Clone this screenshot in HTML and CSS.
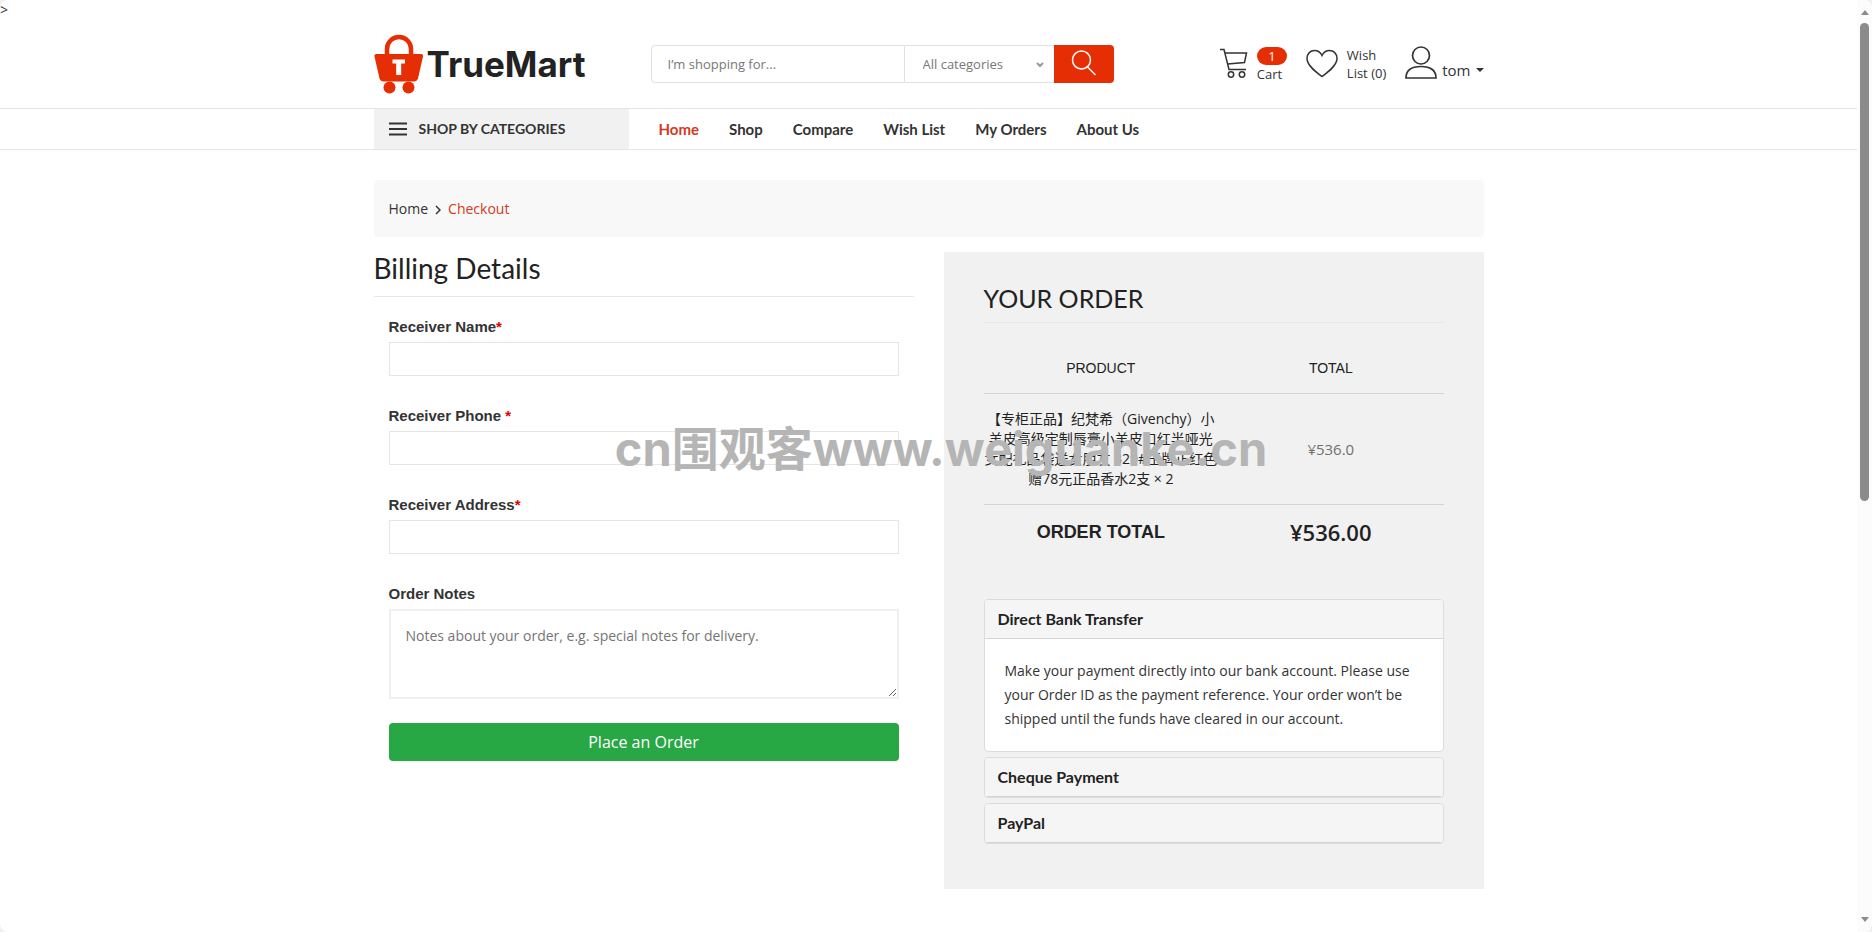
FILE: index.html
```html
<!DOCTYPE html>
<html lang="en">
<head>
    <meta charset="UTF-8">
    <title>Checkout - TrueMart</title>
    <link rel="stylesheet" href="styles.css">
</head>
<body>
<div class="page">
    <div class="stray">&gt;</div>

    <header>
        <div class="container header-top">
            <a class="logo" href="#">
                <svg width="50" height="60" viewBox="0 0 50 60" aria-hidden="true">
                    <path d="M13 22V15a12 12 0 0 1 24 0v7" fill="none" stroke="#e62e04" stroke-width="4.5"/>
                    <path d="M2.500 20h44.500q2.500 0 2 2.500l-5 22q-1 3-4 3h-30.500q-3 0-4-3l-5-22q-.5-2.500 2-2.500z" fill="#e62e04"/>
                    <path d="M18.500 25.500h12.500v4h-3.800v11.500h-5v-11.500h-3.700z" fill="#fff"/>
                    <circle cx="15.500" cy="53.500" r="6" fill="#e62e04"/>
                    <circle cx="34.500" cy="53.500" r="6" fill="#e62e04"/>
                </svg>
                <span>TrueMart</span>
            </a>
            <form class="search">
                <input type="text" aria-label="Search" placeholder="I’m shopping for...">
                <div class="select-wrap">
                    <select aria-label="Category">
                        <option>All categories</option>
                    </select>
                    <svg width="8" height="6" viewBox="0 0 8 6" aria-hidden="true"><path d="M1 1l3 3 3-3" fill="none" stroke="#999" stroke-width="2"/></svg>
                </div>
                <button type="button" aria-label="Search">
                    <svg width="26" height="28" viewBox="0 0 26 28" aria-hidden="true" fill="none" stroke="#fff" stroke-width="1.500">
                        <circle cx="10.500" cy="10" r="9"/>
                        <path d="M16.500 17l8 8"/>
                    </svg>
                </button>
            </form>
            <div class="actions">
                <a class="action" href="#">
                    <svg width="28" height="32" viewBox="0 0 28 32" aria-hidden="true" fill="none" stroke="#333" stroke-width="1.500">
                        <path d="M0 1.500h4l5 20h17"/>
                        <path d="M5 5h21.500l-2 9.500-17 1.500"/>
                        <circle cx="11" cy="26.500" r="2.700"/>
                        <circle cx="22" cy="26.500" r="2.700"/>
                    </svg>
                    <span class="action-text"><b class="badge">1</b>Cart</span>
                </a>
                <a class="action" href="#">
                    <svg width="32" height="30" viewBox="0 0 32 30" aria-hidden="true" fill="none" stroke="#333" stroke-width="1.500">
                        <path d="M16 27.500C10 23 1 16.500 1 9.500 1 4.500 4.500 1.500 8.500 1.500c3.500 0 6 2 7.500 5 1.500-3 4-5 7.500-5 4 0 7.500 3 7.500 8 0 7-9 13.500-15 18z"/>
                    </svg>
                    <span class="action-text">Wish<br>List (0)</span>
                </a>
                <a class="action user" href="#">
                    <svg width="32" height="34" viewBox="0 0 32 34" aria-hidden="true" fill="none" stroke="#333" stroke-width="1.700">
                        <circle cx="16" cy="9.500" r="8.500"/>
                        <path d="M1 32c0-8 6-11.500 15-11.500s15 3.500 15 11.500z"/>
                    </svg>
                    <span>tom</span>
                    <svg class="caret" width="8" height="4" viewBox="0 0 8 4" aria-hidden="true"><path d="M0 0h8l-4 4z" fill="#333"/></svg>
                </a>
            </div>
        </div>
        <div class="menu">
            <div class="container menu-row">
                <button type="button" class="categories">
                    <svg width="18" height="14" viewBox="0 0 18 14" aria-hidden="true"><path d="M0 1.500h18M0 7h18M0 12.500h18" stroke="#333" stroke-width="2"/></svg>
                    SHOP BY CATEGORIES
                </button>
                <nav>
                    <a class="active" href="#">Home</a>
                    <a href="#">Shop</a>
                    <a href="#">Compare</a>
                    <a href="#">Wish List</a>
                    <a href="#">My Orders</a>
                    <a href="#">About Us</a>
                </nav>
            </div>
        </div>
    </header>

    <main class="container">
        <div class="breadcrumb">
            <a href="#">Home</a>
            <svg width="6" height="12" viewBox="0 0 6 12" aria-hidden="true"><path d="M1 3l4 4-4 4" fill="none" stroke="#333" stroke-width="1.500"/></svg>
            <a class="current" href="#">Checkout</a>
        </div>

        <div class="checkout">
            <section>
                <h2>Billing Details</h2>
                <form class="billing">
                    <div class="field">
                        <label for="name">Receiver Name<span>*</span></label>
                        <input type="text" id="name">
                    </div>
                    <div class="field">
                        <label for="phone">Receiver Phone <span>*</span></label>
                        <input type="text" id="phone">
                    </div>
                    <div class="field">
                        <label for="address">Receiver Address<span>*</span></label>
                        <input type="text" id="address">
                    </div>
                    <div class="field notes">
                        <label for="notes">Order Notes</label>
                        <textarea id="notes" placeholder="Notes about your order, e.g. special notes for delivery."></textarea>
                    </div>
                    <button type="button" class="place-order">Place an Order</button>
                </form>
            </section>

            <section class="order">
                <h3>YOUR ORDER</h3>
                <table>
                    <thead>
                        <tr><th>PRODUCT</th><th>TOTAL</th></tr>
                    </thead>
                    <tbody>
                        <tr>
                            <td lang="zh">【专柜正品】纪梵希（Givenchy）小<br>羊皮高级定制唇膏小羊皮口红半哑光<br>女配礼品袋送女朋友 329#王牌正红色<br>赠78元正品香水2支 × 2</td>
                            <td class="price">¥536.0</td>
                        </tr>
                    </tbody>
                    <tfoot>
                        <tr><th>ORDER TOTAL</th><td class="total">¥536.00</td></tr>
                    </tfoot>
                </table>
                <div class="payment">
                    <div class="card">
                        <button type="button">Direct Bank Transfer</button>
                        <p>Make your payment directly into our bank account. Please use your Order ID as the payment reference. Your order won’t be shipped until the funds have cleared in our account.</p>
                    </div>
                    <div class="card closed">
                        <button type="button">Cheque Payment</button>
                    </div>
                    <div class="card closed">
                        <button type="button">PayPal</button>
                    </div>
                </div>
            </section>
        </div>
    </main>
</div>

<div class="scrollbar">
    <svg width="8" height="5" viewBox="0 0 8 5" aria-hidden="true"><path d="M0 5l4-5 4 5z" fill="#8b8b8b"/></svg>
    <div class="track"><div class="thumb"></div></div>
    <svg width="8" height="5" viewBox="0 0 8 5" aria-hidden="true"><path d="M0 0l4 5 4-5z" fill="#8b8b8b"/></svg>
</div>

<div class="watermark">cn<span lang="zh">围观客</span>www.weiguanke.cn</div>
</body>
</html>
```
FILE: styles.css
```css
* {
    box-sizing: border-box;
}
html {
    background: #f0f0f0;
}
body {
    display: flex;
    margin: 0;
    height: 100vh;
    overflow: hidden;
    border-radius: 8px;
    background: #fff;
    color: #333;
    font: 14px/20px "Open Sans", "Noto Sans CJK SC", sans-serif;
}
a {
    color: inherit;
    text-decoration: none;
}
input, select, textarea, button {
    margin: 0;
    font-family: inherit;
    color: inherit;
}
h2, h3, p {
    margin: 0;
}
h2, h3 {
    font-family: Lato, sans-serif;
    font-weight: 400;
    color: #222;
}
.page {
    flex: 1;
}
.stray {
    height: 20px;
}
.container {
    max-width: 1110px;
    margin: 0 auto;
}

/* header */
.header-top {
    display: flex;
    align-items: center;
    height: 88px;
}
.logo {
    display: flex;
    align-items: center;
    gap: 3px;
    width: 277px;
    font: 700 35px/40px Inter, sans-serif;
    color: #222;
}
.search {
    display: flex;
    width: 463px;
    height: 38px;
}
.search input {
    flex: 1;
    min-width: 0;
    padding: 0 16px;
    border: 1px solid #e1e1e1;
    border-radius: 4px 0 0 4px;
    font-size: 13px;
}
.search input::placeholder {
    color: #777;
}
.select-wrap {
    position: relative;
    width: 149px;
}
.select-wrap svg {
    position: absolute;
    right: 10px;
    top: 17px;
}
.select-wrap select {
    appearance: none;
    width: 100%;
    height: 100%;
    padding: 0 18px;
    border: solid #e1e1e1;
    border-width: 1px 0;
    border-radius: 0;
    background: #fff;
    color: #777;
    font-size: 13px;
}
.search button {
    width: 60px;
    padding: 0;
    border: 0;
    border-radius: 0 4px 4px 0;
    background: #e62e04;
}
.search button svg {
    display: block;
    margin: 0 auto;
}
.actions {
    display: flex;
    gap: 19px;
    margin-left: auto;
}
.action {
    display: flex;
    align-items: center;
    gap: 9px;
}
.action-text {
    font-size: 13px;
    line-height: 18px;
}
.badge {
    display: block;
    width: 30px;
    margin-top: 2px;
    border-radius: 9px;
    background: #e62e04;
    color: #fff;
    font-weight: 400;
    text-align: center;
}
.user {
    align-items: flex-end;
    gap: 5px;
    padding-bottom: 3px;
    font-size: 15px;
}
.caret {
    margin-bottom: 8px;
}

/* menu */
.menu {
    border-top: 1px solid #e5e5e5;
    border-bottom: 1px solid #e5e5e5;
}
.menu-row {
    display: flex;
    height: 40px;
    font: 700 15px/40px Lato, sans-serif;
}
.categories {
    display: flex;
    align-items: center;
    gap: 12px;
    width: 255px;
    padding: 0 15px;
    border: 0;
    background: #f1f1f1;
    font: 700 14px/20px Lato, sans-serif;
}
.menu nav {
    display: flex;
    gap: 30px;
    padding-left: 30px;
}
.menu .active, .current {
    color: #d03a22;
}

/* breadcrumb */
.breadcrumb {
    display: flex;
    align-items: center;
    gap: 7px;
    height: 57px;
    margin: 30px 0 15px;
    padding: 0 15px;
    border-radius: 4px;
    background: #f8f8f8;
}

/* billing form */
.checkout {
    display: grid;
    grid-template-columns: 1fr 1fr;
    gap: 30px;
    align-items: start;
}
h2 {
    padding-bottom: 12px;
    border-bottom: 1px solid #e7e7e7;
    font-size: 28px;
    line-height: 32px;
}
.billing {
    padding: 20px 15px;
}
.field {
    display: flex;
    flex-direction: column;
    gap: 5px;
    margin-bottom: 30px;
}
.field label {
    font: 700 15px/20px "Liberation Sans", sans-serif;
}
.field label span {
    color: #e00000;
}
.field input {
    height: 34px;
    padding: 0 12px;
    border: 1px solid #e5e5e5;
}
.notes {
    margin-bottom: 24px;
}
.notes textarea {
    height: 90px;
    padding: 15px;
    border: 2px solid #eceff4;
    font-size: 14px;
    line-height: 20px;
}
.place-order {
    width: 100%;
    height: 38px;
    border: 0;
    border-radius: 4px;
    background: #28a745;
    color: #fff;
    font-size: 16px;
}

/* order summary */
.order {
    padding: 30px 40px 45px;
    background: #f1f1f1;
}
h3 {
    padding-bottom: 8px;
    border-bottom: 1px solid #e7e7e7;
    font-size: 25px;
    line-height: 32px;
}
.order table {
    width: 100%;
    margin: 20px 0 40px;
    border-collapse: collapse;
    text-align: center;
    color: #222;
}
.order th, .order td {
    padding: 15px 0;
}
.order th {
    width: 51%;
    font-family: "Liberation Sans", sans-serif;
}
.order thead th {
    font-weight: 400;
}
.order thead tr, .order tbody tr {
    border-bottom: 1px solid #d5d5d5;
}
.order .price {
    color: #707070;
    font-size: 15px;
}
.order tfoot {
    line-height: 24px;
}
.order tfoot th {
    font-size: 18px;
}
.order .total {
    font-size: 22px;
    font-weight: 600;
}
.payment {
    display: grid;
    gap: 5px;
}
.card {
    overflow: hidden;
    border: 1px solid #dcdcdc;
    border-radius: 4px;
    background: #fff;
}
.card button {
    display: block;
    width: 100%;
    height: 39px;
    padding: 0 13px;
    border: 0;
    border-bottom: 1px solid #d5d5d5;
    background: #f5f5f5;
    color: #222;
    font: 700 16px/20px Lato, sans-serif;
    text-align: left;
}
.card p {
    padding: 20px;
    line-height: 24px;
}

/* scrollbar */
.scrollbar {
    display: flex;
    flex-direction: column;
    align-items: center;
    width: 15px;
    padding: 10px 0;
    background: #fcfcfc;
}
.track {
    flex: 1;
    padding: 8px 0;
}
.thumb {
    width: 9px;
    height: 54%;
    border-radius: 5px;
    background: #8b8b8b;
}

.watermark {
    position: absolute;
    top: 416px;
    left: 0;
    width: 100%;
    padding-left: 10px;
    font: 700 47px/60px Inter, sans-serif;
    color: #b5b5b5;
    text-align: center;
    white-space: nowrap;
    pointer-events: none;
}
.watermark span {
    font-family: "Noto Sans CJK SC", sans-serif;
}
```
